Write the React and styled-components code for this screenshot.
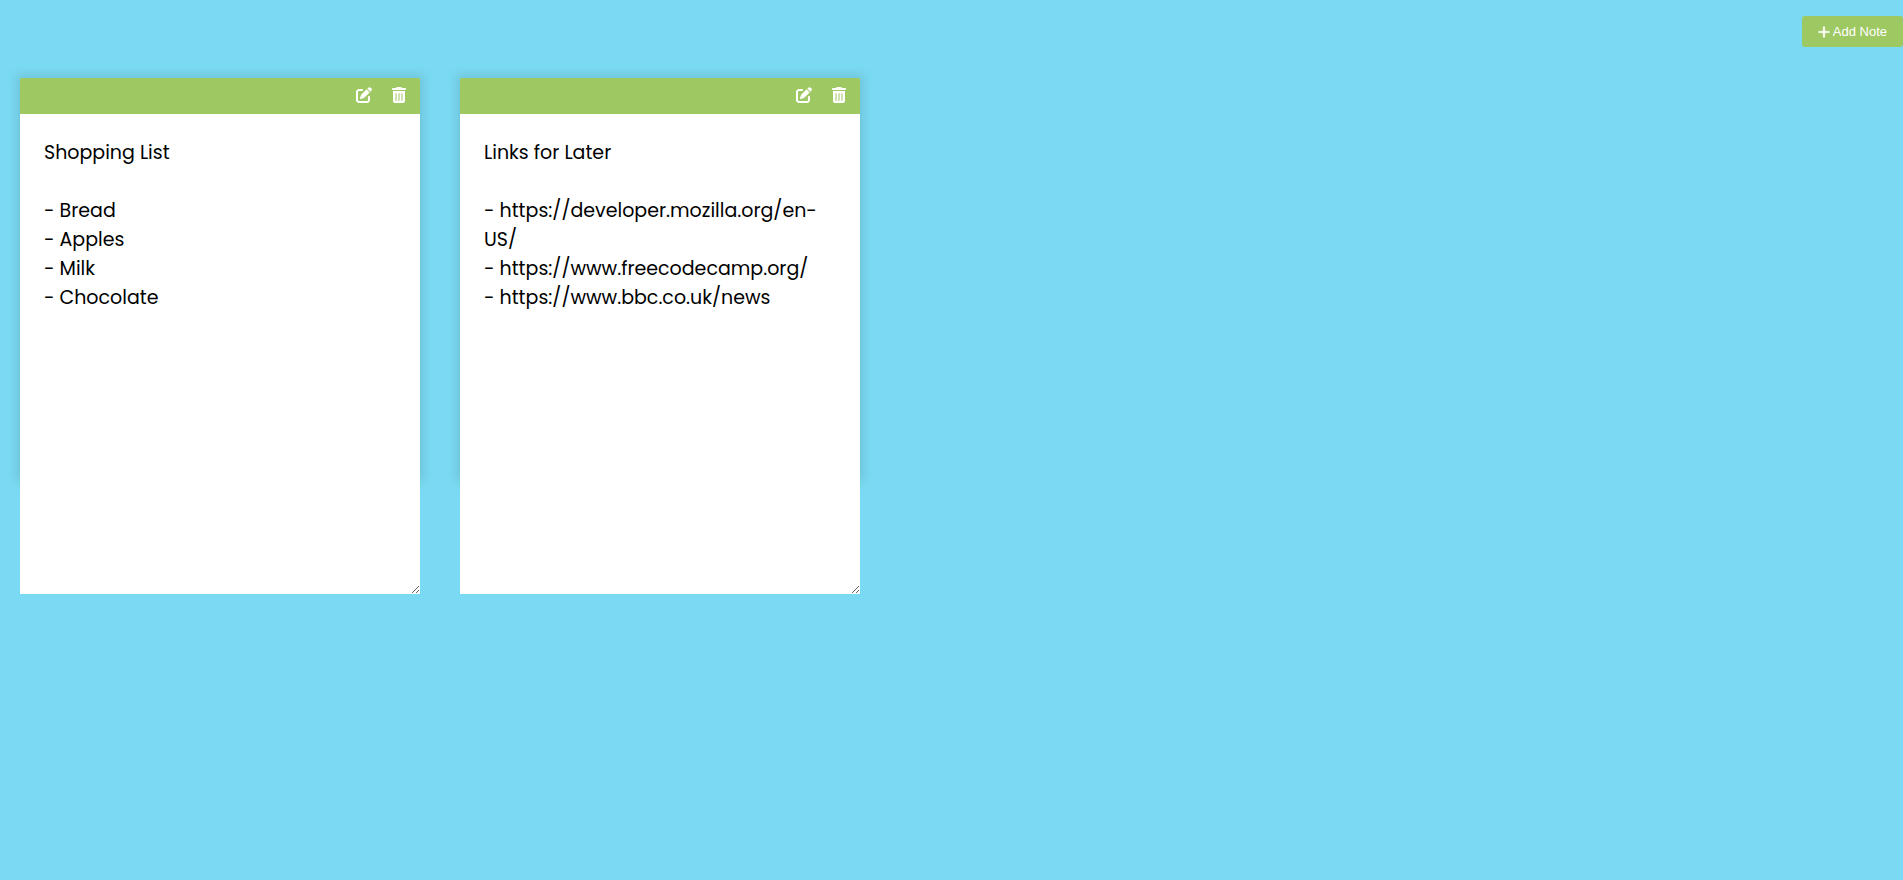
import { useState } from "react";
import styled, { createGlobalStyle } from "styled-components";
import { FaPlus, FaPenToSquare, FaTrashCan } from "react-icons/fa6";

const GlobalStyle = createGlobalStyle`
  * {
    box-sizing: border-box;
  }

  body {
    margin: 0;
    min-height: 100vh;
    background: #7bdaf3;
    font-family: Poppins, Inter, sans-serif;
  }
`;

const Page = styled.div`
  display: flex;
  flex-direction: column;
`;

const Toolbar = styled.header`
  display: flex;
  justify-content: flex-end;
  padding-top: 16px;
`;

const AddButton = styled.button`
  display: flex;
  align-items: center;
  gap: 3px;
  height: 31px;
  padding: 0 16px;
  border: none;
  border-radius: 3px;
  background: #9ec862;
  color: #fff;
  font-family: "Liberation Sans", Arial, sans-serif;
  font-size: 13px;
  cursor: pointer;

  svg {
    width: 12px;
    height: 14px;
    stroke: currentColor;
    stroke-width: 12;
  }
`;

const Board = styled.main`
  display: flex;
  flex-wrap: wrap;
  gap: 40px;
  padding: 31px 20px;
`;

const Note = styled.article`
  width: 400px;
  height: 400px;
  box-shadow: 0 0 10px 4px rgba(0, 0, 0, 0.1);
`;

const NoteTools = styled.div`
  display: flex;
  align-items: center;
  justify-content: flex-end;
  gap: 20px;
  height: 36px;
  padding: 0 14px 2px;
  background: #9ec862;
`;

const ToolButton = styled.button`
  display: flex;
  padding: 0;
  border: none;
  background: transparent;
  color: #fff;
  cursor: pointer;

  svg {
    width: ${({ $iconWidth }) => $iconWidth}px;
    height: 16px;
  }
`;

const NoteText = styled.textarea`
  display: block;
  width: 100%;
  height: 480px;
  padding: 24px;
  border: none;
  outline: none;
  background: #fff;
  color: #000;
  font-family: inherit;
  font-size: 19px;
  line-height: 29px;
`;

const initialNotes = [
  { id: 1, text: "Shopping List\n\n- Bread\n- Apples\n- Milk\n- Chocolate" },
  {
    id: 2,
    text: "Links for Later\n\n- https://developer.mozilla.org/en-US/\n- https://www.freecodecamp.org/\n- https://www.bbc.co.uk/news",
  },
];

export default function App() {
  const [notes, setNotes] = useState(initialNotes);
  const [locked, setLocked] = useState({});

  const addNote = () => setNotes([...notes, { id: Date.now(), text: "" }]);
  const removeNote = (id) => setNotes(notes.filter((n) => n.id !== id));
  const updateNote = (id, text) =>
    setNotes(notes.map((n) => (n.id === id ? { ...n, text } : n)));

  return (
    <Page>
      <GlobalStyle />
      <Toolbar>
        <AddButton type="button" onClick={addNote}>
          <FaPlus aria-hidden="true" />
          Add Note
        </AddButton>
      </Toolbar>
      <Board>
        {notes.map((note) => (
          <Note key={note.id}>
            <NoteTools>
              <ToolButton
                type="button"
                $iconWidth={16}
                aria-label="Edit note"
                onClick={() => setLocked({ ...locked, [note.id]: !locked[note.id] })}
              >
                <FaPenToSquare aria-hidden="true" />
              </ToolButton>
              <ToolButton
                type="button"
                $iconWidth={14}
                aria-label="Delete note"
                onClick={() => removeNote(note.id)}
              >
                <FaTrashCan aria-hidden="true" />
              </ToolButton>
            </NoteTools>
            <NoteText
              aria-label="Note text"
              spellCheck={false}
              readOnly={Boolean(locked[note.id])}
              value={note.text}
              onChange={(e) => updateNote(note.id, e.target.value)}
            />
          </Note>
        ))}
      </Board>
    </Page>
  );
}
